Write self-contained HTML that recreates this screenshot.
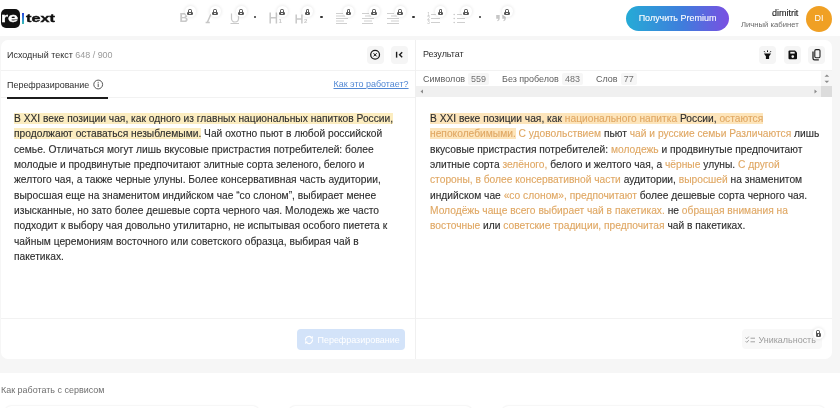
<!DOCTYPE html>
<html><head><meta charset="utf-8">
<style>
*{margin:0;padding:0;box-sizing:border-box}
html,body{width:840px;height:408px;overflow:hidden;background:#fff;font-family:"Liberation Sans",sans-serif;color:#2b2b2b}
.abs{position:absolute}
svg{position:absolute;overflow:visible}
#gray{position:absolute;left:0;top:36px;width:840px;height:337px;background:#f6f6f6}
#card{position:absolute;left:0.5px;top:40px;width:831.3px;height:319px;background:#fff;border-radius:7px}
.hl{position:absolute;height:1px;background:#f2f2f2}
.vl{position:absolute;width:1px;background:#f0f0f0}
.txt{position:absolute;font-size:10.24px;line-height:15.36px;white-space:nowrap;color:#2e2e2e;-webkit-text-stroke:0.12px currentColor}
.ui{position:absolute;font-size:8.96px;line-height:8.96px;white-space:nowrap;color:#2e2e2e}
.hy{background:#fcedc0}
.ho{background:#fde5bb}
.o{color:#e0a864}
.gray{color:#9a9a9a}
.ibtn{position:absolute;width:17px;height:17.5px;border-radius:4px;background:#f5f5f5}
.lock{position:absolute;width:11px;height:11px;border-radius:50%;background:#fff;box-shadow:0 0 3px 1px rgba(0,0,0,0.07)}
.lock:after{content:"";position:absolute;left:2.9px;top:5.4px;width:5.2px;height:3.8px;border-radius:1.3px;background:radial-gradient(circle at 50% 50%,#fff 0.45px,#575757 0.9px)}
.lock:before{content:"";position:absolute;left:3.6px;top:2.5px;width:3.8px;height:4px;border:1.1px solid #575757;border-bottom:none;border-radius:1.9px 1.9px 0 0;box-sizing:border-box}
.dot{position:absolute;width:2.4px;height:2.4px;border-radius:50%;background:#333;margin:-0.2px 0 0 -0.2px}
.tb{position:absolute;color:#c9c9c9}
.stat{position:absolute;font-size:8.96px;line-height:8.96px;color:#5e5e5e;white-space:nowrap}
.num{position:absolute;height:12.4px;background:#f6f6f6;border-radius:2px;font-size:8.96px;line-height:13px;color:#707070;text-align:center}
#wrap{position:absolute;left:0;top:0;width:840px;height:408px;will-change:transform}
</style></head><body><div id="wrap">
<div id="gray"></div>
<div id="card"></div>

<!-- ===== header ===== -->
<div class="abs" style="left:1px;top:9px;width:19px;height:19px;border-radius:5px;background:#111"></div>
<div class="abs" style="left:1.2px;top:12.8px;font-size:13px;line-height:10px;font-weight:bold;color:#fff;transform:scaleX(1.4);transform-origin:0 0;-webkit-text-stroke:0.3px #fff">re</div>
<div class="abs" style="left:22px;top:13.2px;width:2.3px;height:10.4px;background:linear-gradient(#2a3fd6,#2f7fdc 45%,#3ac0b0)"></div>
<div class="abs" style="left:26px;top:13.5px;font-size:10px;line-height:10px;font-weight:bold;color:#111;transform:scaleX(1.62);transform-origin:0 0;-webkit-text-stroke:0.35px #111">text</div>

<!-- toolbar -->
<div class="tb" style="left:179.6px;top:11.6px;font-size:12px;line-height:12px;font-weight:bold">B</div>
<div class="lock" style="left:184.5px;top:6.2px"></div>
<svg style="left:204px;top:13px" width="9" height="11"><path d="M7 1L3.2 9.6M1.6 9.5H5.8" fill="none" stroke="#c6c6c6" stroke-width="1.4"/></svg>
<div class="lock" style="left:209.5px;top:6.2px"></div>
<svg style="left:230px;top:13px" width="10" height="12"><path d="M1.5 0.5V5.5a3.5 3.5 0 0 0 7 0V0.5" fill="none" stroke="#c9c9c9" stroke-width="1.2"/><path d="M0.5 10.5H9" stroke="#c9c9c9" stroke-width="1"/></svg>
<div class="lock" style="left:235.5px;top:6.2px"></div>
<div class="dot" style="left:254px;top:16px"></div>

<svg style="left:269px;top:12px" width="14" height="12"><path d="M1.2 0.5V11.4M7.4 0.5V11.4M1.2 5.8H7.4" fill="none" stroke="#c8c8c8" stroke-width="1.5"/><text x="9.6" y="11.3" font-size="6.2" font-family="Liberation Sans" font-weight="bold" fill="#c8c8c8">1</text></svg>
<div class="lock" style="left:276.5px;top:6.2px"></div>
<svg style="left:294.5px;top:14px" width="14" height="10"><path d="M1.2 0.5V9.4M6.9 0.5V9.4M1.2 4.9H6.9" fill="none" stroke="#c8c8c8" stroke-width="1.5"/><text x="9" y="9.4" font-size="6" font-family="Liberation Sans" font-weight="bold" fill="#c8c8c8">2</text></svg>
<div class="lock" style="left:302px;top:6.2px"></div>
<div class="dot" style="left:320.5px;top:16px"></div>

<svg style="left:336px;top:13px" width="12" height="11"><g stroke="#c9c9c9" stroke-width="0.9"><path d="M0 0.5H7M0 3H9M0 5.5H12M0 8H8M0 10.5H11"/></g></svg>
<div class="lock" style="left:343px;top:6.2px"></div>
<svg style="left:361.5px;top:13px" width="12" height="11"><g stroke="#c9c9c9" stroke-width="0.9"><path d="M0 0.5H7M3 3H9M0 5.5H12M2 8H10M0 10.5H11"/></g></svg>
<div class="lock" style="left:368.5px;top:6.2px"></div>
<svg style="left:387px;top:13px" width="12" height="11"><g stroke="#c9c9c9" stroke-width="0.9"><path d="M0 0.5H7M4 3H10M0 5.5H12M4 8H12M0 10.5H12"/></g></svg>
<div class="lock" style="left:394.5px;top:6.2px"></div>
<div class="dot" style="left:412.5px;top:16px"></div>

<svg style="left:427px;top:12px" width="13" height="12"><g fill="#b9b9b9" font-size="4.6" font-family="Liberation Sans"><text x="0.3" y="4.2">1</text><text x="0.3" y="8.2">2</text><text x="0.3" y="12.2">3</text></g><g stroke="#c9c9c9" stroke-width="0.9"><path d="M4 2.5H13M4 6.5H13M4 10.5H13"/></g></svg>
<div class="lock" style="left:435px;top:6.2px"></div>
<svg style="left:453px;top:12px" width="13" height="12"><g fill="#c9c9c9"><circle cx="1.2" cy="2.5" r="0.8"/><circle cx="1.2" cy="6.5" r="0.8"/><circle cx="1.2" cy="10.5" r="0.8"/></g><g stroke="#c9c9c9" stroke-width="0.9"><path d="M4 2.5H12M4 6.5H12M4 10.5H12"/></g></svg>
<div class="lock" style="left:460.5px;top:6.2px"></div>
<div class="dot" style="left:479px;top:16px"></div>

<svg style="left:495.5px;top:15.2px" width="11" height="7"><g fill="#c6c6c6"><path d="M0.2 0H3.7V3.3C3.7 4.9 3 5.9 1.4 6.3L1.1 5.5C2 5.1 2.3 4.5 2.3 3.7H0.2Z"/><path d="M6.3 0H9.8V3.3C9.8 4.9 9.1 5.9 7.5 6.3L7.2 5.5C8.1 5.1 8.4 4.5 8.4 3.7H6.3Z"/></g></svg>
<div class="lock" style="left:501.5px;top:6.2px"></div>

<!-- premium -->
<div class="abs" style="left:626px;top:6px;width:103px;height:25px;border-radius:13px;background:linear-gradient(90deg,#25abd6,#3f7ddc 55%,#7a4fe2)"></div>
<div class="ui" style="left:638.7px;top:14.3px;color:#fff;-webkit-text-stroke:0.1px #fff">Получить Premium</div>
<div class="ui" style="left:772px;top:9.4px;color:#1e1e1e;-webkit-text-stroke:0.15px #1e1e1e">dimitrit</div>
<div class="ui" style="left:741px;top:21px;font-size:7.68px;line-height:7.68px;color:#6a6a6a">Личный кабинет</div>
<div class="abs" style="left:806px;top:5.5px;width:26px;height:26px;border-radius:50%;background:#f0a024"></div>
<div class="ui" style="left:814.5px;top:14px;color:#fff">DI</div>

<!-- ===== left panel ===== -->
<div class="vl" style="left:415px;top:40px;height:319px"></div>
<div class="ui" style="left:7px;top:50.8px">Исходный текст <span class="gray">648 / 900</span></div>
<div class="ibtn" style="left:367px;top:46px"></div>
<svg style="left:367px;top:46px" width="17" height="17"><circle cx="8.1" cy="8.8" r="4.4" fill="none" stroke="#1e1e1e" stroke-width="1.3"/><path d="M6.5 7.2L9.7 10.4M9.7 7.2L6.5 10.4" stroke="#1e1e1e" stroke-width="1"/><circle cx="8.1" cy="8.8" r="0.9" fill="#1e1e1e"/></svg>
<div class="ibtn" style="left:391px;top:46px"></div>
<svg style="left:391px;top:46px" width="17" height="17"><path d="M5.6 5.8V11.6" stroke="#1e1e1e" stroke-width="1.4"/><path d="M11.2 6.2L8.6 8.7L11.2 11.2" fill="none" stroke="#1e1e1e" stroke-width="1.4"/></svg>
<div class="hl" style="left:1px;top:70px;width:414px"></div>

<div class="ui" style="left:7px;top:80.6px">Перефразирование</div>
<svg style="left:93px;top:79px" width="11" height="11"><circle cx="5.2" cy="5.5" r="4.4" fill="none" stroke="#444" stroke-width="0.9"/><path d="M5.2 4.6V8" stroke="#444" stroke-width="0.9"/><circle cx="5.2" cy="3.2" r="0.55" fill="#444"/></svg>
<div class="ui" style="left:333.5px;top:79.8px;color:#5288d4;text-decoration:underline">Как это работает?</div>
<div class="hl" style="left:1px;top:97px;width:414px"></div>
<div class="abs" style="left:7px;top:97px;width:100.5px;height:2px;background:#1c1c1c"></div>

<div class="txt" style="left:14px;top:110.8px">
<span class="hy">В XXI веке позиции чая, как одного из главных национальных напитков России, </span><br>
<span class="hy">продолжают оставаться незыблемыми.</span> Чай охотно пьют в любой российской<br>
семье. Отличаться могут лишь вкусовые пристрастия потребителей: более<br>
молодые и продвинутые предпочитают элитные сорта зеленого, белого и<br>
желтого чая, а также черные улуны. Более консервативная часть аудитории,<br>
выросшая еще на знаменитом индийском чае “со слоном”, выбирает менее<br>
изысканные, но зато более дешевые сорта черного чая. Молодежь же часто<br>
подходит к выбору чая довольно утилитарно, не испытывая особого пиетета к<br>
чайным церемониям восточного или советского образца, выбирая чай в<br>
пакетиках.
</div>

<div class="hl" style="left:1px;top:318px;width:414px"></div>
<div class="abs" style="left:297.3px;top:329.4px;width:107.7px;height:20.2px;border-radius:4px;background:#d3e3f9"></div>
<svg style="left:303.5px;top:334.8px" width="10" height="10"><g fill="none" stroke="#fff" stroke-width="1.1"><path d="M1.6 5.6A3.5 3.5 0 0 1 7.6 2.6"/><path d="M8.4 4.4A3.5 3.5 0 0 1 2.4 7.4"/></g><g fill="#fff"><path d="M8.9 0.9L8.7 4.1L5.8 2.9Z"/><path d="M1.1 9.1L1.3 5.9L4.2 7.1Z"/></g></svg>
<div class="ui" style="left:317.5px;top:335.8px;color:#fff">Перефразирование</div>

<!-- ===== right panel ===== -->
<div class="ui" style="left:423px;top:50.4px">Результат</div>
<div class="ibtn" style="left:759px;top:46px"></div>
<svg style="left:759px;top:46px" width="17" height="17"><path d="M4.9 7.4H12.1L10.1 10.2V13.1H6.9V10.2Z" fill="#111"/><path d="M8.5 4.4V6M5.1 5.2L5.9 6.3M11.9 5.2L11.1 6.3" stroke="#111" stroke-width="1"/></svg>
<div class="ibtn" style="left:783.5px;top:46px"></div>
<svg style="left:783.5px;top:46px" width="17" height="17"><path d="M4.5 5.5A1 1 0 0 1 5.5 4.5H11L13 6.5V12.3A1 1 0 0 1 12 13.3H5.5A1 1 0 0 1 4.5 12.3Z" fill="#111"/><rect x="6.3" y="5.8" width="4.4" height="1.8" fill="#f3f3f3"/><circle cx="8.75" cy="10.6" r="1.3" fill="#f3f3f3"/></svg>
<div class="ibtn" style="left:808px;top:46px"></div>
<svg style="left:808px;top:46px" width="17" height="17"><rect x="6.8" y="3.6" width="5.2" height="8.2" rx="1.2" fill="none" stroke="#222" stroke-width="1.1"/><path d="M5 5.6V12.2A1.6 1.6 0 0 0 6.6 13.8H10.8" fill="none" stroke="#222" stroke-width="1.3"/></svg>

<div class="hl" style="left:416px;top:70px;width:416px"></div>
<div class="stat" style="left:423px;top:75.3px">Символов</div>
<div class="num" style="left:468px;top:73px;width:21px">559</div>
<div class="stat" style="left:502px;top:75.3px">Без пробелов</div>
<div class="num" style="left:562px;top:73px;width:21px">483</div>
<div class="stat" style="left:596px;top:75.3px">Слов</div>
<div class="num" style="left:621px;top:73px;width:15.5px">77</div>
<!-- scrollbars -->
<div class="abs" style="left:416px;top:86px;width:405px;height:11px;background:#f0f0f0"></div>
<div class="abs" style="left:821px;top:71px;width:11px;height:15px;background:#f6f6f6"></div>
<div class="abs" style="left:821px;top:86px;width:11px;height:11px;background:#dcdcdc"></div>
<svg style="left:419px;top:88px" width="6" height="7"><path d="M4 1.5V5.5L1.5 3.5Z" fill="#8a8a8a"/></svg>
<svg style="left:813px;top:88px" width="6" height="7"><path d="M1.5 1.5V5.5L4 3.5Z" fill="#8a8a8a"/></svg>
<svg style="left:823px;top:73px" width="8" height="12"><path d="M1.5 3.8H6.2L3.85 1.5Z M1.5 7.8H6.2L3.85 10.1Z" fill="#8a8a8a"/></svg>

<div class="txt" style="left:430px;top:110.8px">
<span class="ho">В XXI веке позиции чая, как <span class="o">национального напитка</span> России, <span class="o">остаются</span> </span><br>
<span class="ho o">непоколебимыми.</span> <span class="o">С удовольствием</span> пьют <span class="o">чай и русские семьи Различаются</span> лишь<br>
вкусовые пристрастия потребителей: <span class="o">молодежь</span> и продвинутые предпочитают<br>
элитные сорта <span class="o">зелёного,</span> белого и желтого чая, а <span class="o">чёрные</span> улуны. <span class="o">С другой</span><br>
<span class="o">стороны, в более консервативной части</span> аудитории, <span class="o">выросшей</span> на знаменитом<br>
индийском чае <span class="o">«со слоном», предпочитают</span> более дешевые сорта черного чая.<br>
<span class="o">Молодёжь чаще всего выбирает чай в пакетиках.</span> не <span class="o">обращая внимания на</span><br>
<span class="o">восточные</span> или <span class="o">советские традиции, предпочитая</span> чай в пакетиках.
</div>

<div class="hl" style="left:416px;top:318px;width:416px"></div>
<div class="abs" style="left:742px;top:329px;width:80px;height:19.5px;border-radius:4px;background:#f8f8f8"></div>
<svg style="left:745px;top:336px" width="11" height="8"><path d="M0.6 1.6L1.8 2.8L3.8 0.6M0.6 5.2L1.8 6.4L3.8 4.2" fill="none" stroke="#999" stroke-width="0.9"/><path d="M5.5 2.2H10M5.5 5.8H10" stroke="#999" stroke-width="0.9"/></svg>
<div class="ui" style="left:758.5px;top:335.6px;color:#9c9c9c">Уникальность</div>
<div class="lock" style="left:812.7px;top:327.6px"></div>

<div class="ui" style="left:1px;top:386px;color:#6f6f6f">Как работать с сервисом</div>
<!-- bottom cards -->
<div class="abs" style="left:5px;top:406px;width:254px;height:20px;border-radius:6px;background:#fff;box-shadow:0 0 2px rgba(0,0,0,0.13)"></div>
<div class="abs" style="left:289px;top:406px;width:183px;height:20px;border-radius:6px;background:#fff;box-shadow:0 0 2px rgba(0,0,0,0.13)"></div>
<div class="abs" style="left:502px;top:406px;width:323px;height:20px;border-radius:6px;background:#fff;box-shadow:0 0 2px rgba(0,0,0,0.13)"></div>
</div></body></html>
